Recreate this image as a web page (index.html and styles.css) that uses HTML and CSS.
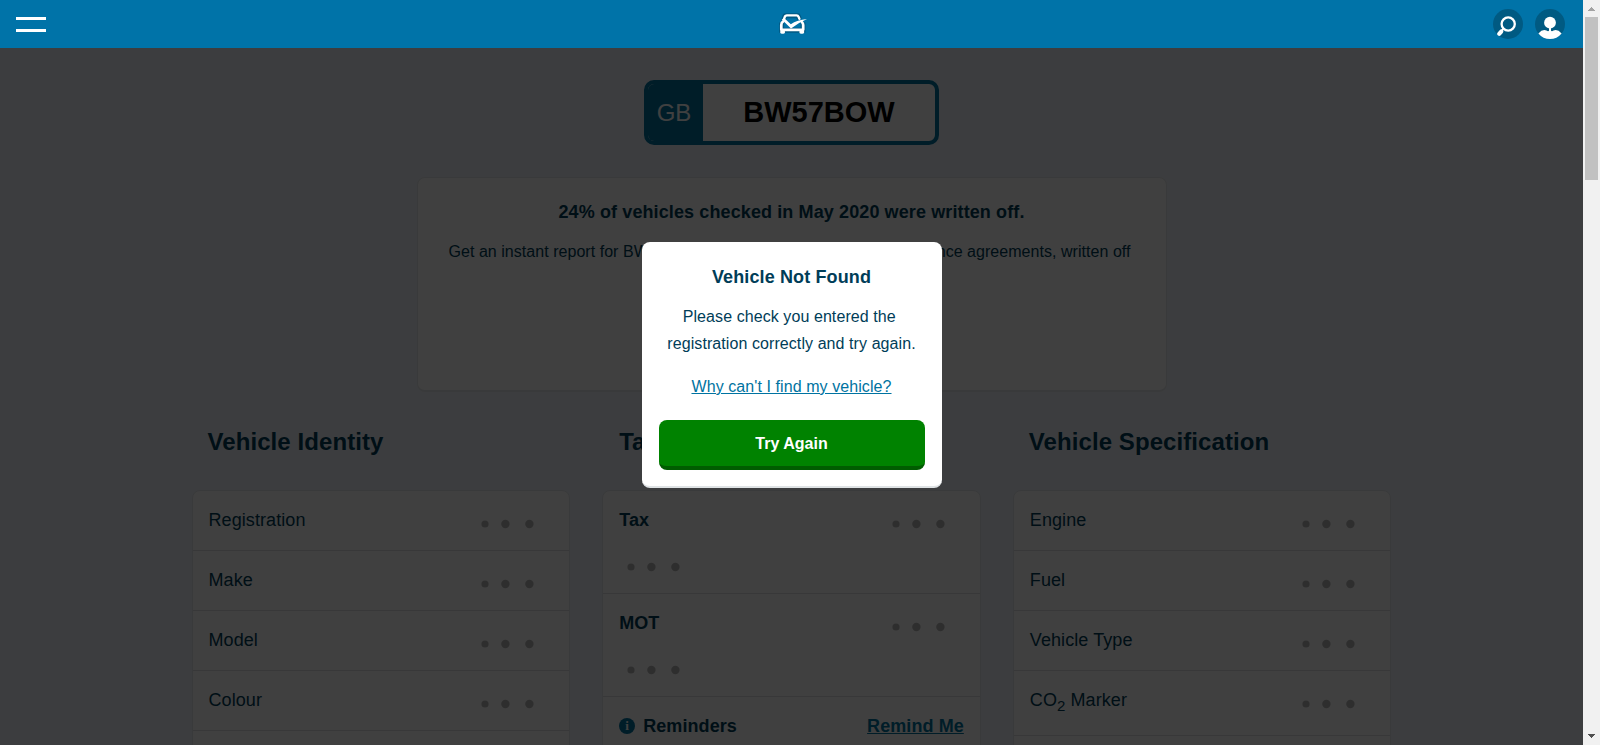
FILE: index.html
```html
<!DOCTYPE html>
<html lang="en">
<head>
<meta charset="utf-8">
<title>Vehicle Check</title>
<link rel="stylesheet" href="styles.css">
</head>
<body>
<svg class="defs" width="0" height="0">
  <symbol id="dots" viewBox="0 0 54 10"><circle cx="5" cy="5" r="3.6"/><circle cx="25.4" cy="5" r="4.2"/><circle cx="49.4" cy="5" r="4.2"/></symbol>
</svg>
<div class="screen">
  <div class="page">
    <header class="topbar">
      <div class="burger"><span></span><span></span></div>
      <svg class="logo" width="30" height="24" viewBox="0 0 30 24">
        <g fill="none" stroke="#00476a" stroke-width="5" stroke-linejoin="round" opacity=".6"><path d="M5.4 9 L7 3.8 H20 L21.6 7.4 M3.6 10.5 V20.8 M25 10.5 V20.8 M3 18.3 H25.6"/></g>
        <g fill="none" stroke="#fff" stroke-linejoin="round" stroke-linecap="round">
          <path stroke-width="2.4" d="M5.6 8 L7 4.4 Q7.5 3.4 8.8 3.4 H18.6 Q20 3.4 20.5 4.6 L21.4 6.8"/>
          <path stroke-width="2.7" d="M5 9.6 Q3.3 10.6 3.3 13 V17.8 H25.2 V13 Q25.2 11.2 24 10.2"/>
          <path stroke-width="3.4" d="M3.8 20 H5.4 M23 20 H24.6"/>
        </g>
        <path fill="#fff" d="M3.6 7.2 L7.2 7 L12.8 12.2 Q19 8.2 29 7.1 Q21 10.6 13 16.4 Z"/>
      </svg>
      <div class="tools">
        <svg width="30" height="30" viewBox="0 0 30 30">
          <circle cx="15" cy="15" r="15" fill="#005a82"/>
          <circle cx="15.2" cy="15" r="6.6" fill="none" stroke="#fff" stroke-width="2.3"/>
          <path d="M10.8 19.5 L8 22.4" stroke="#fff" stroke-width="2"/>
          <path d="M8.2 22.6 L6.2 24.8" stroke="#fff" stroke-width="4.2" stroke-linecap="round"/>
        </svg>
        <svg width="30" height="30" viewBox="0 0 30 30">
          <circle cx="15" cy="15" r="15" fill="#005a82"/>
          <circle cx="15" cy="13.7" r="5.9" fill="#fff"/>
          <path d="M14 19 H16 V21.8 Q17 22.6 18.5 21.5 Q22.5 19.8 26.6 24.4 Q22 30 15 30 Q8 30 3.4 24.4 Q7.5 19.8 11.5 21.5 Q13 22.6 14 21.8 Z" fill="#fff"/>
        </svg>
      </div>
    </header>
    <main class="content">
      <div class="plate"><div class="plate-gb">GB</div><div class="plate-reg">BW57BOW</div></div>
      <section class="promo">
        <h2>24% of vehicles checked in May 2020 were written off.</h2>
        <p><span>Get an instant report for BW57BOW</span><span>finance agreements, written off</span></p>
      </section>
      <div class="columns">
        <section>
          <h1>Vehicle Identity</h1>
          <div class="card">
            <div class="row"><span>Registration</span><svg class="dots"><use href="#dots"/></svg></div>
            <div class="row"><span>Make</span><svg class="dots"><use href="#dots"/></svg></div>
            <div class="row"><span>Model</span><svg class="dots"><use href="#dots"/></svg></div>
            <div class="row"><span>Colour</span><svg class="dots"><use href="#dots"/></svg></div>
            <div class="row"></div>
          </div>
        </section>
        <section>
          <h1 class="mid">Tax &amp; MOT</h1>
          <div class="card">
            <div class="row tall"><div class="line"><b>Tax</b><svg class="dots"><use href="#dots"/></svg></div><svg class="dots second"><use href="#dots"/></svg></div>
            <div class="row tall"><div class="line"><b>MOT</b><svg class="dots"><use href="#dots"/></svg></div><svg class="dots second"><use href="#dots"/></svg></div>
            <div class="row"><b class="with-icon"><i class="info">i</i>Reminders</b><a class="remind">Remind Me</a></div>
          </div>
        </section>
        <section>
          <h1>Vehicle Specification</h1>
          <div class="card">
            <div class="row"><span>Engine</span><svg class="dots"><use href="#dots"/></svg></div>
            <div class="row"><span>Fuel</span><svg class="dots"><use href="#dots"/></svg></div>
            <div class="row"><span>Vehicle Type</span><svg class="dots"><use href="#dots"/></svg></div>
            <div class="row marker"><span>CO<sub>2</sub> Marker</span><svg class="dots"><use href="#dots"/></svg></div>
            <div class="row"></div>
          </div>
        </section>
      </div>
    </main>
    <div class="overlay">
      <div class="modal">
        <h3>Vehicle Not Found</h3>
        <p>Please check you entered the&nbsp;<br>registration correctly and try again.</p>
        <a>Why can't I find my vehicle?</a>
        <div class="button">Try Again</div>
      </div>
    </div>
  </div>
  <div class="scrollbar">
    <svg width="17" height="17" viewBox="0 0 17 17" shape-rendering="crispEdges"><path d="M8 7h1v1h1v1h1v1h1v1H5v-1h1V9h1V8h1z" fill="#a3a3a3"/></svg>
    <div class="thumb"></div>
    <svg class="down" width="17" height="17" viewBox="0 0 17 17" shape-rendering="crispEdges"><path d="M5 6h7v1h-1v1h-1v1H9v1H8V9H7V8H6V7H5z" fill="#505050"/></svg>
  </div>
</div>
</body>
</html>
```
FILE: styles.css
```css
* { box-sizing: border-box; }
body { margin: 0; overflow: hidden; font-family: "Liberation Sans", Arial, sans-serif; color: #003d58; }
h1, h2, h3, p { margin: 0; }
.defs { position: absolute; }
.screen { display: flex; height: 745px; }
.page { position: relative; flex: 1; overflow: hidden; background: #f0f4fa; }
.topbar { position: relative; z-index: 3; height: 48px; padding: 0 18px 0 16px; display: grid; grid-template-columns: 1fr auto 1fr; align-items: center; background: #0073a8; }
.burger { display: grid; gap: 9px; width: 30px; }
.burger span { height: 3px; background: #fff; }
.logo { margin-left: 5px; }
.tools { display: flex; gap: 12px; justify-content: flex-end; }
.content { width: 1200px; margin: 0 auto; padding-top: 32px; }
.plate { display: flex; width: 295px; height: 65px; margin: 0 auto; border: 4px solid #0073a1; border-radius: 10px; background: #fff; overflow: hidden; }
.plate-gb { width: 55px; padding-right: 3px; background: #0073a1; color: #fff; font-size: 24px; line-height: 57px; text-align: center; }
.plate-reg { flex: 1; color: #000; font-size: 29px; font-weight: bold; line-height: 57px; text-align: center; }
.promo { width: 750px; height: 215px; margin: 32px auto 0; padding: 22px 35px 0 31px; background: #fff; border: 1px solid #e4e7ea; border-bottom-width: 2px; border-radius: 8px; }
.promo h2 { margin-right: -4px; font-size: 18px; line-height: 24px; letter-spacing: .11px; text-align: center; white-space: nowrap; }
.promo p { display: flex; justify-content: space-between; margin-top: 14px; font-size: 16px; line-height: 27px; letter-spacing: .04px; }
.columns { display: grid; grid-template-columns: repeat(3, 1fr); gap: 32px; margin-top: 36px; }
.columns h1 { padding-left: 16px; font-size: 24px; line-height: 28px; letter-spacing: .08px; }
.columns h1.mid { padding-left: 17px; }
.card { margin-top: 34px; background: #fff; border: 1px solid #e4e7ea; border-radius: 8px; }
.row { display: flex; justify-content: space-between; height: 60px; padding: 16px 16px 0; border-bottom: 1px solid #dde0e3; font-size: 18px; line-height: 26px; letter-spacing: .08px; }
.row.tall { display: block; height: 103px; }
.line { display: flex; justify-content: space-between; }
.row.marker { height: 65px; }
.dots { display: block; flex: none; width: 54px; height: 10px; margin: 12px 19px 0 0; fill: #b8b8b8; }
.dots.second { margin: 29px 0 0 7px; }
.line .dots { margin-bottom: 4px; }
sub { font-size: 15px; line-height: 0; }
.with-icon { display: flex; align-items: center; align-self: flex-start; gap: 8px; }
.info { width: 16px; height: 16px; border-radius: 50%; background: #0073a1; color: #fff; font: bold 13px/16px "Liberation Serif", serif; text-align: center; }
.remind { color: #0073a1; font-weight: bold; text-decoration: underline; }
.overlay { position: absolute; inset: 0; display: flex; justify-content: center; align-items: flex-start; padding-top: 242px; background: rgba(0, 0, 0, .75); }
.modal { width: 300px; height: 246px; padding: 23px 17px 0; border: 1px solid #dfe3e5; border-width: 0 0 2px; border-radius: 8px; background: #fff; text-align: center; font-size: 16px; line-height: 27px; letter-spacing: .08px; }
.modal h3 { font-size: 18px; line-height: 24px; letter-spacing: .12px; }
.modal p { margin-top: 14px; }
.modal a { display: block; margin-top: 16px; color: #0073a1; text-decoration: underline; }
.button { height: 50px; margin-top: 20px; border-bottom: 4px solid #005c00; border-radius: 8px; background: #008200; color: #fff; font-weight: bold; line-height: 47px; letter-spacing: 0; }
.scrollbar { display: flex; flex-direction: column; width: 17px; background: #f1f1f1; }
.thumb { width: 13px; height: 163px; margin-left: 2px; background: #c1c1c1; }
.down { margin-top: auto; }
```
